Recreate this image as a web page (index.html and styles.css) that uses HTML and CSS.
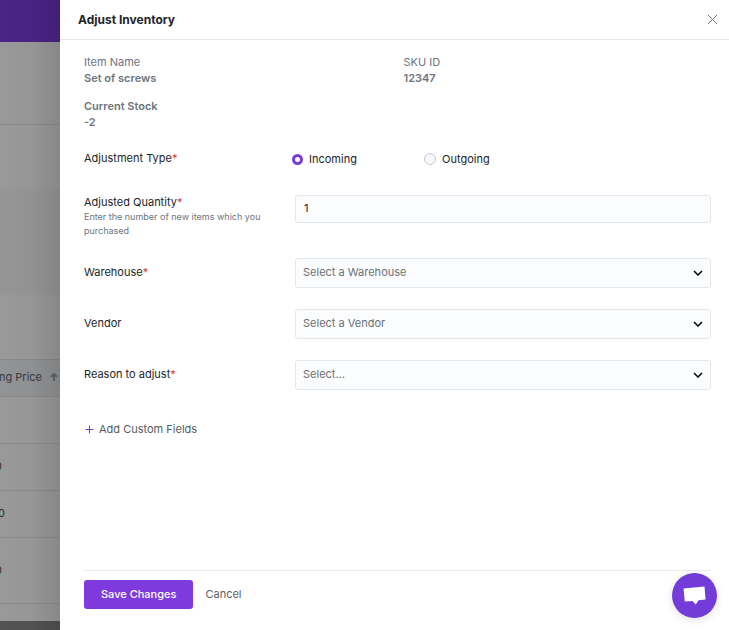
FILE: index.html
```html
<!DOCTYPE html>
<html lang="en">
<head>
	<meta charset="utf-8">
	<meta name="viewport" content="width=device-width, initial-scale=1">
	<title>Adjust Inventory</title>
	<link rel="stylesheet" href="styles.css">
</head>
<body>
	<!-- inventory page under the overlay -->
	<div class="page">
		<div class="topbar"></div>
		<div class="page-title"></div>
		<div class="page-tabs"></div>
		<div class="page-filter"></div>
		<div class="page-search"></div>
		<table class="items">
			<thead>
				<tr>
					<th>
						<span class="sort">ing Price
							<svg width="8" height="8" viewBox="0 0 8 8"><path d="M4 8V1M1 4l3-3 3 3"/></svg>
						</span>
					</th>
				</tr>
			</thead>
			<tbody>
				<tr><td></td></tr>
				<tr><td>0</td></tr>
				<tr><td class="wide">0</td></tr>
				<tr class="tall"><td>0</td></tr>
			</tbody>
		</table>
		<div class="page-bottom"></div>
		<div class="overlay"></div>
	</div>

	<form class="drawer">
		<div class="drawer-header">
			<h1>Adjust Inventory</h1>
			<button type="button" class="close" aria-label="Close">
				<svg width="11" height="11" viewBox="0 0 11 11"><path d="M1 1l9 9M10 1l-9 9"/></svg>
			</button>
		</div>

		<div class="drawer-body">
			<dl class="info">
				<div>
					<dt>Item Name</dt>
					<dd>Set of screws</dd>
				</div>
				<div>
					<dt>SKU ID</dt>
					<dd>12347</dd>
				</div>
				<div class="stock">
					<dt>Current Stock</dt>
					<dd>-2</dd>
				</div>
			</dl>

			<div class="row row-type" role="radiogroup" aria-labelledby="type-label">
				<span class="label" id="type-label">Adjustment Type<span class="required">*</span></span>
				<div class="radios">
					<label class="radio"><input type="radio" name="type" value="incoming" checked>Incoming</label>
					<label class="radio"><input type="radio" name="type" value="outgoing">Outgoing</label>
				</div>
			</div>

			<div class="row row-quantity">
				<div>
					<label class="label" for="quantity">Adjusted Quantity<span class="required">*</span></label>
					<p class="help">Enter the number of new items which you purchased</p>
				</div>
				<input class="control" type="text" id="quantity" name="quantity" value="1">
			</div>

			<div class="row">
				<label class="label" for="warehouse">Warehouse<span class="required">*</span></label>
				<div class="select">
					<select class="control" id="warehouse" name="warehouse">
						<option>Select a Warehouse</option>
					</select>
					<svg width="10" height="6" viewBox="0 0 10 6"><path d="M1 1l4 4 4-4"/></svg>
				</div>
			</div>

			<div class="row">
				<label class="label" for="vendor">Vendor</label>
				<div class="select">
					<select class="control" id="vendor" name="vendor">
						<option>Select a Vendor</option>
					</select>
					<svg width="10" height="6" viewBox="0 0 10 6"><path d="M1 1l4 4 4-4"/></svg>
				</div>
			</div>

			<div class="row">
				<label class="label" for="reason">Reason to adjust<span class="required">*</span></label>
				<div class="select">
					<select class="control" id="reason" name="reason">
						<option>Select...</option>
					</select>
					<svg width="10" height="6" viewBox="0 0 10 6"><path d="M1 1l4 4 4-4"/></svg>
				</div>
			</div>

			<button type="button" class="add-field">
				<svg width="9" height="9" viewBox="0 0 9 9"><path d="M4.5 0.5v8M0.5 4.5h8"/></svg>
				Add Custom Fields
			</button>
		</div>

		<div class="drawer-footer">
			<button type="submit" class="save">Save Changes</button>
			<button type="button" class="cancel">Cancel</button>
		</div>
	</form>

	<button type="button" class="chat" aria-label="Chat">
		<svg width="23" height="20" viewBox="0 0 23 20"><path d="M0.5 2.5L21.5 0.5L22.5 13.5L15.5 14.2L12.8 18.5L9.5 15L1.8 15.5Z"/></svg>
	</button>
</body>
</html>
```

FILE: styles.css
```css
* {
	box-sizing: border-box;
}
body {
	margin: 0;
	display: flex;
	min-height: 100vh;
	font-family: Inter, "Liberation Sans", sans-serif;
	font-size: 11px;
	line-height: 16px;
	color: #212529;
	background-color: #fff;
}
button, input, select {
	font: inherit;
	color: inherit;
}
button {
	padding: 0;
	border: 0;
	background: none;
	cursor: pointer;
}
svg {
	fill: none;
	stroke: currentColor;
}
h1, p, dl, dd {
	margin: 0;
}

/* page behind */
.page {
	position: relative;
	flex: 0 0 60px;
	display: flex;
	flex-direction: column;
	overflow: hidden;
	background-color: #fff;
}
.topbar {
	height: 42px;
	background-color: #7d3be0;
}
.page-title {
	height: 83px;
	border-bottom: 1px solid #e9e9e9;
}
.page-tabs {
	height: 64px;
}
.page-filter {
	height: 106px;
	background-color: #f9f9fa;
}
.page-search {
	height: 64px;
}
.items {
	width: 100%;
	table-layout: fixed;
	border-collapse: collapse;
	text-align: right;
	color: #4a4f58;
}
.items th {
	height: 37px;
	padding: 0 2px 2px 0;
	border-top: 1px solid #e4e6e8;
	border-bottom: 1px solid #e9e9e9;
	background-color: #f3f5f7;
	color: #5e6570;
	font-weight: 400;
}
.sort {
	display: flex;
	justify-content: flex-end;
	align-items: center;
	gap: 8px;
	white-space: nowrap;
}
.sort svg {
	flex: none;
	color: #a3a8b0;
	stroke-width: 2;
}
.items td {
	height: 47px;
	padding: 0 58px 2px 0;
	border-bottom: 1px solid #e9e9e9;
	direction: rtl;
}
.items td.wide {
	padding-right: 55px;
}
.items .tall td {
	height: 66px;
}
.page-bottom {
	height: 9px;
	margin-top: auto;
	background-color: #8a8a8a;
}
.overlay {
	position: absolute;
	inset: 0;
	background: linear-gradient(to right, rgba(0,0,0,0.4), rgba(0,0,0,0.41) 50%, rgba(0,0,0,0.47));
}

/* drawer */
.drawer {
	flex: 1;
	min-width: 0;
	display: flex;
	flex-direction: column;
	background-color: #fff;
}
.drawer-header {
	display: flex;
	justify-content: space-between;
	align-items: center;
	height: 40px;
	padding: 0 11px 0 18px;
	border-bottom: 1px solid #e5e6e8;
}
.drawer-header h1 {
	font-size: 12px;
	font-weight: 700;
}
.close {
	display: flex;
	color: #6c757d;
}
.drawer-body {
	flex: 1;
	padding: 14px 18px 0 24px;
}
.info {
	display: grid;
	grid-template-columns: 1fr 1fr;
	gap: 12px;
	color: #6c757d;
}
.info dd, .info .stock dt {
	font-weight: 600;
}
.row {
	display: grid;
	grid-template-columns: 211px 1fr;
	align-items: center;
	margin-bottom: 21px;
}
.row > .label {
	padding-bottom: 2px;
}
.row-type {
	grid-template-columns: 208px 1fr;
	margin: 20px 0 26px;
}
.row-quantity {
	align-items: start;
	margin-bottom: 20px;
}
.row-quantity .control {
	margin-top: 1px;
	padding-bottom: 2px;
}
.required {
	color: #d9363e;
}
.help {
	width: 190px;
	font-size: 9px;
	line-height: 14px;
	color: #6c757d;
}
.radios {
	display: flex;
}
.radio {
	display: flex;
	align-items: center;
	gap: 6px;
	width: 132px;
}
.radio input {
	appearance: none;
	width: 12px;
	height: 12px;
	margin: 0;
	border: 1px solid #c5c9d3;
	border-radius: 50%;
	background-color: #f8f9fc;
}
.radio input:checked {
	width: 11px;
	height: 11px;
	border: 3px solid #7a3adb;
	background-color: #fff;
}
.control {
	width: 100%;
	height: 28px;
	padding: 0 8px;
	border: 1px solid #e3e6ea;
	border-radius: 3px;
	background-color: #fbfcfe;
}
.select {
	position: relative;
}
.select select {
	display: block;
	appearance: none;
	height: 30px;
	padding: 0 7px 2px;
	color: #6b7075;
}
.select svg {
	position: absolute;
	right: 8px;
	top: 12px;
	color: #000;
	stroke-width: 1.5;
	pointer-events: none;
}
.add-field {
	display: flex;
	align-items: center;
	gap: 5px;
	margin: 31px 0 0 1px;
	color: #555b62;
}
.add-field svg {
	color: #7b35e0;
}
.drawer-footer {
	display: flex;
	align-items: center;
	gap: 12px;
	margin: 0 18px 0 24px;
	padding: 9px 0 21px;
	border-top: 1px solid #e8ebee;
}
.save {
	height: 29px;
	padding: 0 17px 2px;
	border-radius: 3px;
	background-color: #7f3add;
	color: #fff;
	font-weight: 500;
}
.cancel {
	padding-bottom: 2px;
	color: #5a6068;
}

/* chat bubble */
.chat {
	position: fixed;
	right: 12px;
	bottom: 12px;
	display: flex;
	align-items: center;
	justify-content: center;
	width: 45px;
	height: 45px;
	border-radius: 50%;
	background-color: #733bd8;
	box-shadow: 0 2px 8px rgba(0,0,0,0.12);
}
.chat svg {
	fill: #fff;
	stroke: none;
}
```
